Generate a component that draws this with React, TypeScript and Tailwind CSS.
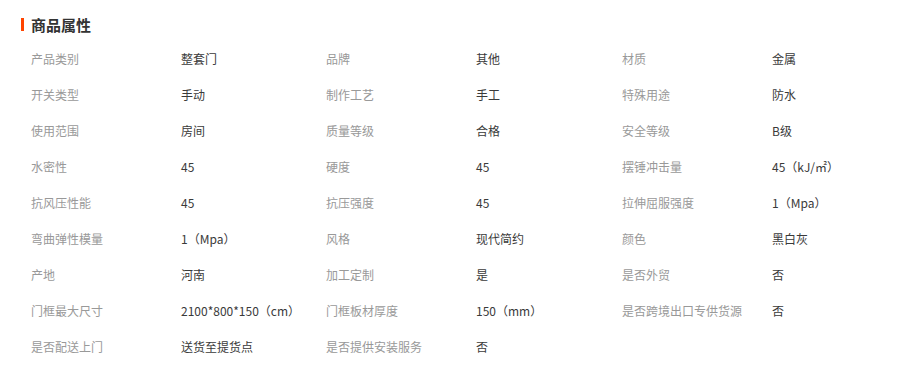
import React from "react";

const rows: [string, string, string, string, string, string][] = [
  ["产品类别", "整套门", "品牌", "其他", "材质", "金属"],
  ["开关类型", "手动", "制作工艺", "手工", "特殊用途", "防水"],
  ["使用范围", "房间", "质量等级", "合格", "安全等级", "B级"],
  ["水密性", "45", "硬度", "45", "摆锤冲击量", "45（kJ/㎡）"],
  ["抗风压性能", "45", "抗压强度", "45", "拉伸屈服强度", "1（Mpa）"],
  ["弯曲弹性模量", "1（Mpa）", "风格", "现代简约", "颜色", "黑白灰"],
  ["产地", "河南", "加工定制", "是", "是否外贸", "否"],
  ["门框最大尺寸", "2100*800*150（cm）", "门框板材厚度", "150（mm）", "是否跨境出口专供货源", "否"],
  ["是否配送上门", "送货至提货点", "是否提供安装服务", "否", "", ""],
];

export default function App() {
  return (
    <div
      className="w-[897px] h-[371px] bg-white overflow-hidden pt-[16px] pl-[21px]"
      style={{ fontFamily: '"Noto Sans CJK SC", "Liberation Sans", sans-serif' }}
    >
      <div className="flex items-center h-[16px]">
        <div className="w-[3px] h-[13px] bg-[#ff4400]" />
        <div className="ml-[7px] text-[15px] font-bold text-[#333] leading-none">商品属性</div>
      </div>
      <div className="mt-[9px] pl-[10px]">
        {rows.map((r, i) => (
          <div key={i} className="grid grid-cols-[150px_145px_150px_146px_150px_150px] h-[36px] items-center text-[12px] leading-none">
            <div className="text-[#999]">{r[0]}</div>
            <div className="text-[#3a3a3a]">{r[1]}</div>
            <div className="text-[#999]">{r[2]}</div>
            <div className="text-[#3a3a3a]">{r[3]}</div>
            <div className="text-[#999]">{r[4]}</div>
            <div className="text-[#3a3a3a]">{r[5]}</div>
          </div>
        ))}
      </div>
    </div>
  );
}
